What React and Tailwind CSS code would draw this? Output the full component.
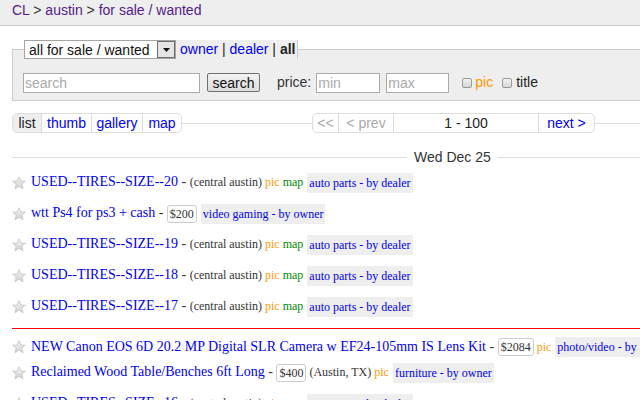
import React from "react";

const Star = () => (
  <svg width="14" height="14" viewBox="0 0 14 14" className="shrink-0">
    <defs>
      <linearGradient id="sg" x1="0" y1="0" x2="0" y2="1">
        <stop offset="0" stopColor="#f6f6f6" />
        <stop offset="1" stopColor="#cfcfcf" />
      </linearGradient>
    </defs>
    <path
      d="M7 0.8 L8.8 5 L13.3 5.2 L9.8 8.1 L11 12.8 L7 10.2 L3 12.8 L4.2 8.1 L0.7 5.2 L5.2 5 Z"
      fill="url(#sg)"
      stroke="#c2c2c2"
      strokeWidth="0.8"
      strokeLinejoin="round"
    />
  </svg>
);

function Row({ cls, title, price, loc, pic, map, tag }) {
  return (
    <div className={cls}>
      <div className="ml-[12px]">
        <Star />
      </div>
      <div className="ml-[5px] whitespace-nowrap font-['Liberation_Serif',serif] text-[14px] leading-[20px] text-[#333]">
        <span className="text-[#00e]">{title}</span>
        <span> - </span>
        {price && (
          <span className="inline-block align-middle h-[18px] leading-[16px] border border-[#ccc] rounded-[3px] px-[2px] text-[12px] text-[#333] mr-[3px]">
            {price}
          </span>
        )}
        {loc && <span className="text-[12px] text-[#333]">{loc} </span>}
        {pic && <span className="text-[12px] text-[#f90]">pic </span>}
        {map && <span className="text-[12px] text-[#080]">map </span>}
        <span className="inline-block align-middle h-[20px] leading-[20px] bg-[#eee] px-[2px] ml-[1px] text-[12px] text-[#00e]">
          {tag}
        </span>
      </div>
    </div>
  );
}

const Checkbox = () => (
  <span className="inline-block w-[10px] h-[10px] rounded-[2px] border border-[#9a9a9a] bg-[linear-gradient(to_bottom,#f0f0f0,#d6d6d6)]" />
);

export default function App() {
  return (
    <div className="w-[640px] h-[400px] overflow-hidden bg-white font-['Liberation_Sans',Arial,sans-serif] text-[14px] text-[#222]">
      {/* header */}
      <div className="h-[26px] bg-[#eee] border-b border-[#ccc] pl-[12px] pt-[2px] leading-[16px] whitespace-nowrap">
        <span className="text-[#551a8b]">CL</span>
        <span className="text-[#333]"> &gt; </span>
        <span className="text-[#551a8b]">austin</span>
        <span className="text-[#333]"> &gt; </span>
        <span className="text-[#551a8b]">for sale / wanted</span>
      </div>

      {/* search fieldset */}
      <div className="mt-[23px] ml-[12px] h-[52px] bg-[#eee] border-t border-b border-l border-[#ccc]">
        <div className="-mt-[10px] ml-[11px] flex h-[19px] w-max">
          <div className="w-[152px] h-[19px] bg-white border border-[#a5a5a5] flex items-center">
            <span className="pl-[4px] flex-1 leading-[16px] text-[#111]">all for sale / wanted</span>
            <span className="w-[18px] h-[17px] bg-[#e4e4e4] border border-[#6f6f6f] flex items-center justify-center">
              <svg width="7" height="4" viewBox="0 0 7 4">
                <path d="M0 0 H7 L3.5 4 Z" fill="#111" />
              </svg>
            </span>
          </div>
          <div className="h-[19px] bg-[#eee] border-r border-[#ccc] pl-[4px] pr-[2px] leading-[19px] whitespace-nowrap">
            <span className="text-[#00e]">owner</span>
            <span className="text-[#222]"> | </span>
            <span className="text-[#00e]">dealer</span>
            <span className="text-[#222]"> | </span>
            <span className="font-bold text-[#222]">all</span>
          </div>
        </div>
        <div className="mt-[13px] ml-[10px] flex items-center whitespace-nowrap">
          <div className="w-[177px] h-[20px] bg-white border border-[#aaa] pl-[1px] leading-[18px] text-[#aaa]">
            search
          </div>
          <div className="ml-[7px] w-[53px] h-[19px] rounded-[2px] border border-[#707070] bg-[linear-gradient(to_bottom,#f2f2f2,#dcdcdc)] flex items-center justify-center leading-[16px] text-[#111]">
            search
          </div>
          <span className="ml-[17px] text-[#333]">price:</span>
          <div className="ml-[5px] w-[64px] h-[20px] bg-white border border-[#aaa] pl-[1px] leading-[18px] text-[#aaa]">
            min
          </div>
          <div className="ml-[6px] w-[63px] h-[20px] bg-white border border-[#aaa] pl-[1px] leading-[18px] text-[#aaa]">
            max
          </div>
          <span className="ml-[13px] flex items-center">
            <Checkbox />
          </span>
          <span className="ml-[3px] text-[#f90]">pic</span>
          <span className="ml-[9px] flex items-center">
            <Checkbox />
          </span>
          <span className="ml-[4px] text-[#222]">title</span>
        </div>
      </div>

      {/* view + pagination */}
      <div className="mt-[12px] h-[20px] flex items-center">
        <div className="ml-[12px] flex h-[20px] border border-[#ddd] rounded-[5px] overflow-hidden leading-[18px] whitespace-nowrap">
          <span className="w-[29px] text-center bg-[#eee] text-[#222] border-r border-[#ddd]">list</span>
          <span className="w-[50px] text-center text-[#00e] border-r border-[#ddd]">thumb</span>
          <span className="w-[51px] text-center text-[#00e] border-r border-[#ddd]">gallery</span>
          <span className="w-[38px] text-center text-[#00e]">map</span>
        </div>
        <div className="flex-1 h-px bg-[#ddd]" />
        <div className="flex h-[20px] border border-[#ddd] rounded-[5px] overflow-hidden leading-[18px] whitespace-nowrap">
          <span className="w-[26px] text-center text-[#aaa] border-r border-[#ddd]">&lt;&lt;</span>
          <span className="w-[55px] text-center text-[#aaa] border-r border-[#ddd]">&lt; prev</span>
          <span className="w-[145px] text-center text-[#222] border-r border-[#ddd]">1 - 100</span>
          <span className="w-[55px] text-center text-[#00e]">next &gt;</span>
        </div>
        <div className="w-[45px] h-px bg-[#ddd]" />
      </div>

      {/* date */}
      <div className="mt-[14px] h-[20px] flex items-center">
        <div className="ml-[12px] w-[395px] h-px bg-[#ddd]" />
        <span className="ml-[7px] text-[#333] leading-[16px] whitespace-nowrap">Wed Dec 25</span>
        <div className="ml-[7px] flex-1 h-px bg-[#ddd]" />
      </div>

      {/* rows */}
      <Row cls="flex items-center h-[31px]" title="USED--TIRES--SIZE--20" loc="(central austin)" pic map tag="auto parts - by dealer" />
      <Row cls="flex items-center h-[31px]" title="wtt Ps4 for ps3 + cash" price="$200" tag="video gaming - by owner" />
      <Row cls="flex items-center h-[31px]" title="USED--TIRES--SIZE--19" loc="(central austin)" pic map tag="auto parts - by dealer" />
      <Row cls="flex items-center h-[31px]" title="USED--TIRES--SIZE--18" loc="(central austin)" pic map tag="auto parts - by dealer" />
      <Row cls="flex items-center h-[31px]" title="USED--TIRES--SIZE--17" loc="(central austin)" pic map tag="auto parts - by dealer" />

      <div className="mt-[6px] ml-[12px] h-px bg-[#f00]" />

      <Row cls="flex items-center h-[26px] mt-[5px]" title="NEW Canon EOS 6D 20.2 MP Digital SLR Camera w EF24-105mm IS Lens Kit" price="$2084" pic tag="photo/video - by owner" />
      <Row cls="flex items-center h-[25px]" title="Reclaimed Wood Table/Benches 6ft Long" price="$400" loc="(Austin, TX)" pic tag="furniture - by owner" />
      <Row cls="flex items-center h-[31px] mt-[3px]" title="USED--TIRES--SIZE--16" loc="(central austin)" pic map tag="auto parts - by dealer" />
    </div>
  );
}
